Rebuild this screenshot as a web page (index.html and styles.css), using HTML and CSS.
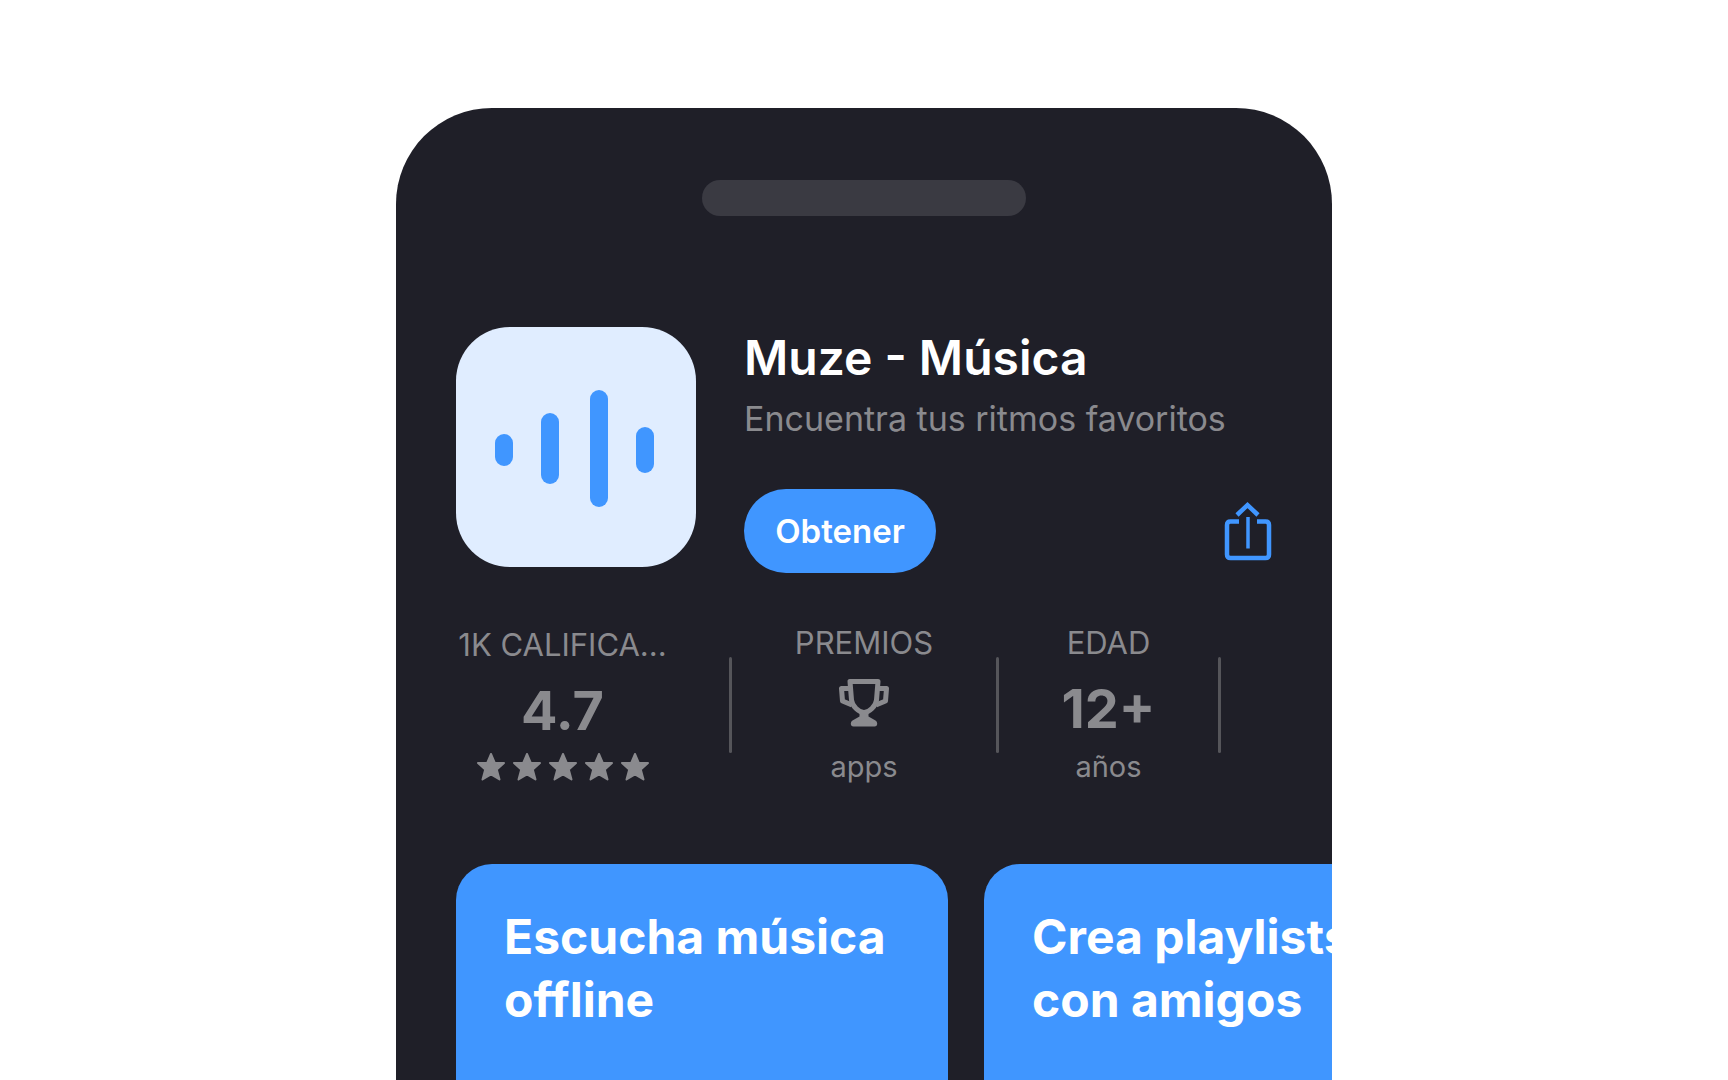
FILE: index.html
```html
<!DOCTYPE html>
<html lang="es">
<head>
    <meta charset="UTF-8">
    <meta name="viewport" content="width=device-width, initial-scale=1.0">
    <title>Muze - Música</title>
    <link rel="stylesheet" href="styles.css">
</head>
<body>
    <main class="phone">
        <div class="notch"></div>

        <header class="app-header">
            <svg class="app-icon" viewBox="0 0 240 240" aria-hidden="true">
                <rect x="39" y="107" width="18" height="32" rx="9"/>
                <rect x="85" y="86" width="18" height="71" rx="9"/>
                <rect x="134" y="63" width="18" height="117" rx="9"/>
                <rect x="180" y="100" width="18" height="46" rx="9"/>
            </svg>
            <div class="app-info">
                <h1>Muze - Música</h1>
                <p class="subtitle">Encuentra tus ritmos favoritos</p>
                <div class="actions">
                    <button type="button" class="get-btn">Obtener</button>
                    <button type="button" class="share-btn" aria-label="Compartir">
                        <svg viewBox="0 0 48 60" aria-hidden="true">
                            <path d="M15 20.500H6.500Q3 20.500 3 24V53.500Q3 57 6.500 57H41.500Q45 57 45 53.500V24Q45 20.500 41.500 20.500H33" stroke-width="4.500"/>
                            <path d="M13 14L23.500 4L34 14" stroke-width="4.500"/>
                            <path d="M24 16V47.500" stroke-width="3.500"/>
                        </svg>
                    </button>
                </div>
            </div>
        </header>

        <section class="stats">
            <div class="stat ratings">
                <span class="stat-label">1K CALIFICA...</span>
                <strong class="stat-value">4.7</strong>
                <svg class="stars" viewBox="0 0 172 28" role="img" aria-label="5 estrellas">
                    <defs>
                        <path id="star" d="M14 1L17.800 10H27L19.800 16.500L22.500 26.500L14 21.500L5.500 26.500L8.200 16.500L1 10H10.200Z"/>
                    </defs>
                    <use href="#star"/>
                    <use href="#star" x="36"/>
                    <use href="#star" x="72"/>
                    <use href="#star" x="108"/>
                    <use href="#star" x="144"/>
                </svg>
            </div>
            <div class="divider"></div>
            <div class="stat awards">
                <span class="stat-label">PREMIOS</span>
                <svg class="trophy" viewBox="0 0 50 48" aria-hidden="true">
                    <path class="trophy-line" d="M11 2.500H39L37.500 21C37 27 30 33.500 25 33.500S13 27 12.500 21Z"/>
                    <path class="trophy-line" d="M11.500 9.500H2.500L3.500 22L13 26M38.500 9.500H47.500L46.500 22L37 26"/>
                    <path class="trophy-base" d="M20.500 32H29.500V37.500L36.500 41.500Q38.200 42.500 38.200 44.500Q38.200 47.500 35.500 47.500H14.500Q11.800 47.500 11.800 44.500Q11.800 42.500 13.500 41.500L20.500 37.500Z"/>
                </svg>
                <span class="stat-note">apps</span>
            </div>
            <div class="divider"></div>
            <div class="stat age">
                <span class="stat-label">EDAD</span>
                <strong class="stat-value">12+</strong>
                <span class="stat-note">años</span>
            </div>
            <div class="divider"></div>
        </section>

        <section class="cards">
            <article class="card">
                <h2>Escucha música offline</h2>
            </article>
            <article class="card">
                <h2>Crea playlists con amigos</h2>
            </article>
        </section>
    </main>
</body>
</html>
```

FILE: styles.css
```css
* {
    box-sizing: border-box;
}

body {
    margin: 0;
    min-height: 100vh;
    padding-top: 108px;
    display: flex;
    justify-content: center;
    background-color: #fff;
    font-family: Inter, "Liberation Sans", sans-serif;
}

h1, h2, p {
    margin: 0;
}

.phone {
    display: flex;
    flex-direction: column;
    width: 100%;
    max-width: 936px;
    padding: 72px 60px 0;
    overflow: hidden;
    border-radius: 96px 96px 0 0;
    background-color: #1f1f28;
    color: #8a8a8e;
}

.notch {
    align-self: center;
    width: 324px;
    height: 36px;
    margin-bottom: 111px;
    border-radius: 18px;
    background-color: #3a3a42;
}

.app-header {
    display: flex;
    gap: 48px;
}

.app-icon {
    flex: none;
    width: 240px;
    height: 240px;
    border-radius: 54px;
    background-color: #e0edff;
    fill: #4096ff;
}

.app-info {
    flex: 1;
}

h1 {
    font-size: 48px;
    font-weight: 600;
    line-height: 62px;
    color: #fff;
}

.subtitle {
    margin-top: 6px;
    font-size: 34px;
    font-weight: 400;
    line-height: 48px;
}

.actions {
    display: flex;
    justify-content: space-between;
    align-items: center;
    margin-top: 46px;
}

button {
    padding: 0;
    border: 0;
    background: none;
    font-family: inherit;
    cursor: pointer;
}

.get-btn {
    height: 84px;
    min-width: 192px;
    border-radius: 42px;
    background-color: #4096ff;
    color: #fff;
    font-size: 33px;
    font-weight: 600;
    line-height: 40px;
}

.share-btn svg {
    display: block;
    width: 48px;
    height: 60px;
    fill: none;
    stroke: #4096ff;
}

.stats {
    display: flex;
    align-items: center;
    gap: 60px;
    margin-top: 50px;
}

.stat {
    display: flex;
    flex-direction: column;
    align-items: center;
    white-space: nowrap;
}

.ratings {
    width: 213px;
}

.awards {
    width: 144px;
}

.age {
    width: 99px;
}

.stat-label {
    font-size: 31px;
    font-weight: 400;
    line-height: 40px;
}

.stat-value {
    margin: 14px 0 8px;
    font-size: 54px;
    font-weight: 700;
    line-height: 64px;
}

.stat-note {
    margin-bottom: 2px;
    font-size: 29px;
    font-weight: 400;
    line-height: 36px;
}

.stars {
    width: 172px;
    height: 28px;
    margin: 2px 0 4px;
    fill: currentColor;
    stroke: currentColor;
    stroke-width: 2;
    stroke-linejoin: round;
}

.trophy {
    width: 50px;
    height: 48px;
    margin: 16px 0 22px;
}

.trophy-line {
    fill: none;
    stroke: currentColor;
    stroke-width: 5;
    stroke-linejoin: round;
}

.trophy-base {
    fill: currentColor;
}

.divider {
    width: 3px;
    height: 96px;
    border-radius: 2px;
    background-color: #55555a;
}

/* the row of cards runs off the right edge of the phone */
.cards {
    display: flex;
    flex: 1;
    gap: 36px;
    margin: 77px -60px 0 0;
}

.card {
    flex: none;
    width: 492px;
    padding: 41px 48px;
    border-radius: 36px 36px 0 0;
    background-color: #4096ff;
}

.card h2 {
    font-size: 48px;
    font-weight: 700;
    line-height: 63px;
    color: #fff;
}
```
